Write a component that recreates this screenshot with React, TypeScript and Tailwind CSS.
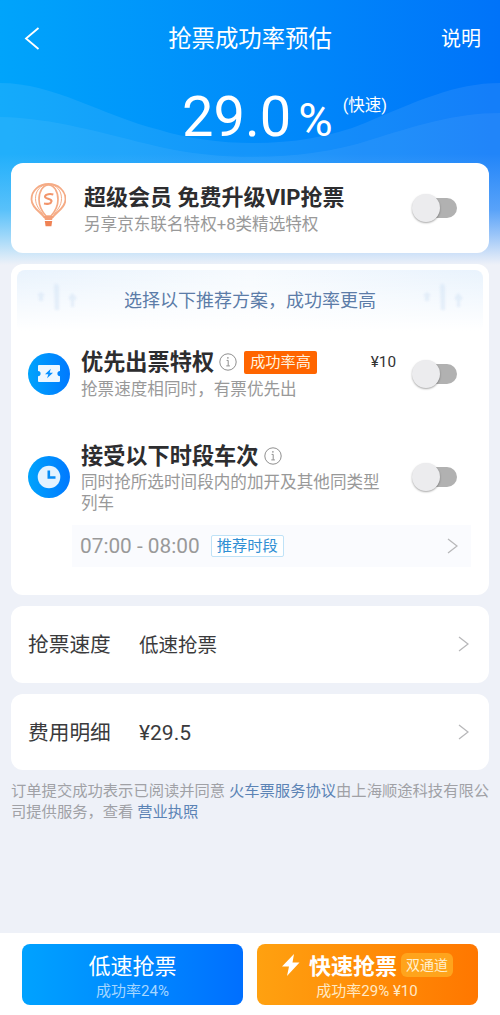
import React from 'react';

interface ToggleProps {
  label: string;
}

const Toggle: React.FC<ToggleProps> = ({ label }) => (
  <button
    role="switch"
    aria-checked={false}
    aria-label={label}
    className="flex h-[31px] w-[46px] shrink-0 items-center"
  >
    <span className="relative ml-px size-[28px] shrink-0 rounded-full bg-[#ececee] shadow-[0_1px_2px_rgba(0,0,0,0.35)]" />
    <span className="-ml-[4px] h-5 w-[21px] rounded-r-full bg-[#b1b1b1]" />
  </button>
);

const BackIcon = () => (
  <svg className="ml-[13px] h-[23px] w-4" viewBox="0 0 16 23" fill="none" stroke="currentColor" strokeWidth="1.8">
    <path d="M14.500 1L2 11.500l12.500 10.500" />
  </svg>
);

const ArrowIcon = () => (
  <svg className="h-4 w-[11px] shrink-0" viewBox="0 0 11 16" fill="none" stroke="#b8b8ba" strokeWidth="1.3">
    <path d="M1 1l9 7-9 7" />
  </svg>
);

const InfoIcon = () => (
  <svg className="size-[18px] shrink-0" viewBox="0 0 18 18" fill="none" stroke="#8f8f8f">
    <circle cx="9" cy="9" r="8.2" strokeWidth="1" />
    <path d="M7.6 7.4h1.6v5.4M7.3 12.9h3.6" strokeWidth="1" />
    <circle cx="8.9" cy="4.9" r="0.8" fill="#8f8f8f" stroke="none" />
  </svg>
);

const BalloonIcon = () => (
  <svg className="-mt-[6px] h-[44px] w-[36px] shrink-0" viewBox="0 0 36 44" fill="none" stroke="#f5ab85">
    <path d="M14 34C10 28.500 1.500 24.500 1.500 16.200 1.500 7.500 9 1 18.500 1S35.500 7.500 35.500 16.200C35.500 24.500 27 28.500 23 34z" strokeWidth="1.800" />
    <path d="M14.500 33.500C10 27 5.500 23 5.500 15.500 5.500 9 9 4 14 2M22.500 33.500C27 27 31.500 23 31.500 15.500 31.500 9 28 4 23 2" strokeWidth="1" />
    <path d="M16 33C12 28.500 9 23.500 9 16.500 9 8.500 13 1.800 18.500 1.800S28 8.500 28 16.500C28 23.500 25 28.500 21 33z" strokeWidth="1.700" />
    <path d="M23.300 11.500c-2.800-.8-7.800-.7-8.300 2-.5 2.800 7 1.800 6.500 4.800-.5 2.700-4.500 2.900-7.500 2.200" stroke="#f2956b" strokeWidth="2.100" />
    <path d="M13.500 33h10l-1.500 4h-7z" fill="#f4a079" stroke="none" />
    <path d="M14.800 38h7.400l-.8 5.200h-5.800z" fill="#ef8254" stroke="none" />
  </svg>
);

const TicketIcon = () => (
  <svg className="size-[42px] shrink-0" viewBox="0 0 42 42">
    <defs>
      <linearGradient id="ticketBg">
        <stop stopColor="#00a3fc" />
        <stop offset="1" stopColor="#0079ff" />
      </linearGradient>
    </defs>
    <circle cx="21" cy="21" r="21" fill="url(#ticketBg)" />
    <path d="M11 12h20q1 0 1 1v5a2.600 2.600 0 0 0 0 5.200V28q0 1-1 1H11q-1 0-1-1v-4.800A2.600 2.600 0 0 0 10 18v-5q0-1 1-1z" fill="#eef7ff" />
    <path d="M22.800 15.800l-5.800 5.500h3.300l-1.200 4 5.900-5.600h-3.300z" fill="#0790ff" />
  </svg>
);

const ClockIcon = () => (
  <svg className="size-[42px] shrink-0" viewBox="0 0 42 42">
    <defs>
      <linearGradient id="clockBg">
        <stop stopColor="#00a3fc" />
        <stop offset="1" stopColor="#0079ff" />
      </linearGradient>
    </defs>
    <circle cx="21" cy="21" r="21" fill="url(#clockBg)" />
    <circle cx="21" cy="21" r="11.300" fill="#e5f3ff" />
    <path d="M20.800 14.500v7h6.700" fill="none" stroke="#078cf5" strokeWidth="2.600" />
  </svg>
);

// Soft wave pattern behind the percentage
const HeaderWaves = () => (
  <svg className="absolute inset-x-0 top-[80px] h-[185px] w-full" viewBox="0 0 500 185" preserveAspectRatio="none">
    <defs>
      <linearGradient id="fade" x1="0" y1="0" x2="0" y2="1">
        <stop offset="0.4" stopColor="#eef1f8" stopOpacity="0" />
        <stop offset="0.7" stopColor="#eef1f8" stopOpacity="0.27" />
        <stop offset="0.84" stopColor="#eef1f8" stopOpacity="0.6" />
        <stop offset="0.95" stopColor="#eef1f8" stopOpacity="0.88" />
        <stop offset="1" stopColor="#eef1f8" />
      </linearGradient>
    </defs>
    <path d="M0 3C55 3 100 35 160 50C215 67 300 70 365 43C415 22 455 3 500 3V185H0z" fill="#fff" fillOpacity="0.08" />
    <path d="M0 37C55 38 100 53 160 67C225 82 310 80 370 60C415 46 455 33 500 33V185H0z" fill="#fff" fillOpacity="0.06" />
    <rect width="500" height="185" fill="url(#fade)" />
  </svg>
);

const Skyline = () => (
  <svg className="-mt-2 h-7 w-10 blur-[1px]" viewBox="0 0 40 28" fill="#cfe1f4" fillOpacity="0.45">
    <path d="M0 12l4-3 4 3-2 1v5H2v-5zM17 3l2-3 3 3v24h-4zM32 14l3-4 4 4v3h-2v7h-3v-7h-2z" />
  </svg>
);

interface DetailRowProps {
  name: string;
  value: React.ReactNode;
}

const DetailRow: React.FC<DetailRowProps> = ({ name, value }) => (
  <section className="flex h-[76.5px] items-center rounded-xl bg-white pr-[20px] pl-[17px] text-[#3a3a3c]">
    <span className="w-[111px] pt-[3px] text-[20.7px]">{name}</span>
    <span className="flex-1 pt-[3px] text-[19.5px]">{value}</span>
    <ArrowIcon />
  </section>
);

const App: React.FC = () => {
  return (
    <div className="flex h-[1015px] w-[500px] flex-col overflow-hidden bg-[#eef1f8] font-[Roboto,'Noto_Sans_CJK_SC',sans-serif] whitespace-nowrap">
      <div className="relative flex-1">
        <div className="absolute inset-x-0 top-0 h-[265px] bg-linear-to-r from-[#00a4fb] to-[#0073f9]">
          <HeaderWaves />
        </div>

        <div className="relative px-[11px]">
          <header className="grid h-[76px] grid-cols-[1fr_auto_1fr] items-center text-white">
            <BackIcon />
            <h1 className="pt-[3px] text-[23.4px]">抢票成功率预估</h1>
            <span className="justify-self-end pt-[2px] pr-2 text-[20px]">说明</span>
          </header>

          <div className="flex h-[87px] items-baseline pl-[171px] leading-[83px] text-white">
            <span className="text-[56px]">29.0</span>
            <span className="ml-[7px] text-[47px]">%</span>
            <span className="ml-[10px] self-start text-[16.5px] leading-[60px]">(快速)</span>
          </div>

          <main className="flex flex-col gap-[11px]">
            <section className="flex h-[90px] items-center rounded-xl bg-white pr-8 pl-[19px]">
              <BalloonIcon />
              <div className="ml-[18px] flex-1 pt-[3px]">
                <h2 className="text-[22px] leading-[29px] font-bold text-[#2d2d2f]">超级会员 免费升级VIP抢票</h2>
                <p className="text-[16.6px] leading-[25px] text-[#999]">另享京东联名特权+8类精选特权</p>
              </div>
              <Toggle label="超级会员" />
            </section>

            <section className="h-[331px] rounded-xl bg-white px-[6px] pt-[6px]">
              <div className="flex h-[61px] items-center justify-between rounded-lg bg-[linear-gradient(to_bottom,transparent,white),linear-gradient(to_right,#e9f3fd,#f6fafe_50%,#e9f3fd)] px-5">
                <Skyline />
                <p className="text-[18px] text-[#5c7ca8]">选择以下推荐方案，成功率更高</p>
                <Skyline />
              </div>

              <div className="flex items-center pt-[15px] pr-[26px] pl-[11px]">
                <TicketIcon />
                <div className="ml-[11px] flex-1">
                  <div className="flex h-[32px] items-center">
                    <h2 className="pt-[2px] text-[22.2px] font-bold text-[#2d2d2f]">优先出票特权</h2>
                    <span className="ml-[5px] flex"><InfoIcon /></span>
                    <span className="ml-[7px] flex h-[23px] items-center rounded-[2px] bg-[#ff6500] px-[6px] pt-px text-[15.2px] text-[#fff2df]">成功率高</span>
                    <span className="ml-auto pr-[15px] text-[15.3px] text-[#333]">¥10</span>
                  </div>
                  <p className="text-[16.6px] leading-[24px] text-[#999]">抢票速度相同时，有票优先出</p>
                </div>
                <Toggle label="优先出票特权" />
              </div>

              <div className="flex items-center pt-[38px] pr-[26px] pl-[11px]">
                <ClockIcon />
                <div className="ml-[11px] flex-1">
                  <div className="flex h-[32px] items-center">
                    <h2 className="pt-[2px] text-[22.2px] font-bold text-[#2d2d2f]">接受以下时段车次</h2>
                    <span className="ml-[5px] flex"><InfoIcon /></span>
                  </div>
                  <p className="text-[16.6px] leading-[21px] text-[#999]">
                    同时抢所选时间段内的加开及其他同类型
                    <br />
                    列车
                  </p>
                </div>
                <Toggle label="接受以下时段车次" />
              </div>

              <div className="mt-[11px] mr-3 ml-[55px] flex h-[42px] items-center bg-[#fafbfe] pr-[13px] pl-[8px]">
                <span className="pt-[2px] text-[20.8px] text-[#999]">07:00 - 08:00</span>
                <span className="ml-[11px] flex h-[22px] items-center rounded-[2px] border border-[#bfe2f7] bg-white px-[5px] pt-px text-[15.3px] text-[#2f8fd4]">推荐时段</span>
                <span className="ml-auto"><ArrowIcon /></span>
              </div>
            </section>

            <DetailRow name="抢票速度" value="低速抢票" />
            <DetailRow name="费用明细" value={<span className="text-[21px]">¥29.5</span>} />
          </main>

          <p className="mt-[11px] text-[15.3px] leading-[21px] text-[#a0a1a6]">
            订单提交成功表示已阅读并同意 <a className="text-[#5b83b5]">火车票服务协议</a>由上海顺途科技有限公
            <br />
            司提供服务，查看 <a className="text-[#5b83b5]">营业执照</a>
          </p>
        </div>
      </div>

      <footer className="flex h-[82px] gap-[14px] bg-white px-[22px] pt-[11px]">
        <button className="flex h-[61px] flex-1 flex-col items-center rounded-lg bg-linear-to-r from-[#00a2ff] to-[#006fff] pt-[7px] text-white">
          <span className="text-[22px] leading-[31px]">低速抢票</span>
          <span className="text-[15px] leading-[19px] text-[#a5d6ff]">成功率24%</span>
        </button>
        <button className="flex h-[61px] flex-1 flex-col items-center rounded-lg bg-linear-to-r from-[#ffa110] to-[#ff7700] pt-[7px] text-white">
          <span className="flex h-[31px] items-center">
            <svg className="-mt-1 h-[22px] w-[18px]" viewBox="0 0 18 22" fill="#fff">
              <path d="M12 0L0 12.500h7L5 22 17.500 8.500h-7z" />
            </svg>
            <span className="ml-[9px] text-[22px] font-bold">快速抢票</span>
            <span className="-mt-1 ml-1 flex h-6 items-center rounded-md bg-[#ffa41c] px-[5px] pt-px text-[14px] text-[#fff0cf]">双通道</span>
          </span>
          <span className="mr-px text-[15px] leading-[19px] text-[#ffe9c4]">成功率29% ¥10</span>
        </button>
      </footer>
    </div>
  );
};

export default App;
